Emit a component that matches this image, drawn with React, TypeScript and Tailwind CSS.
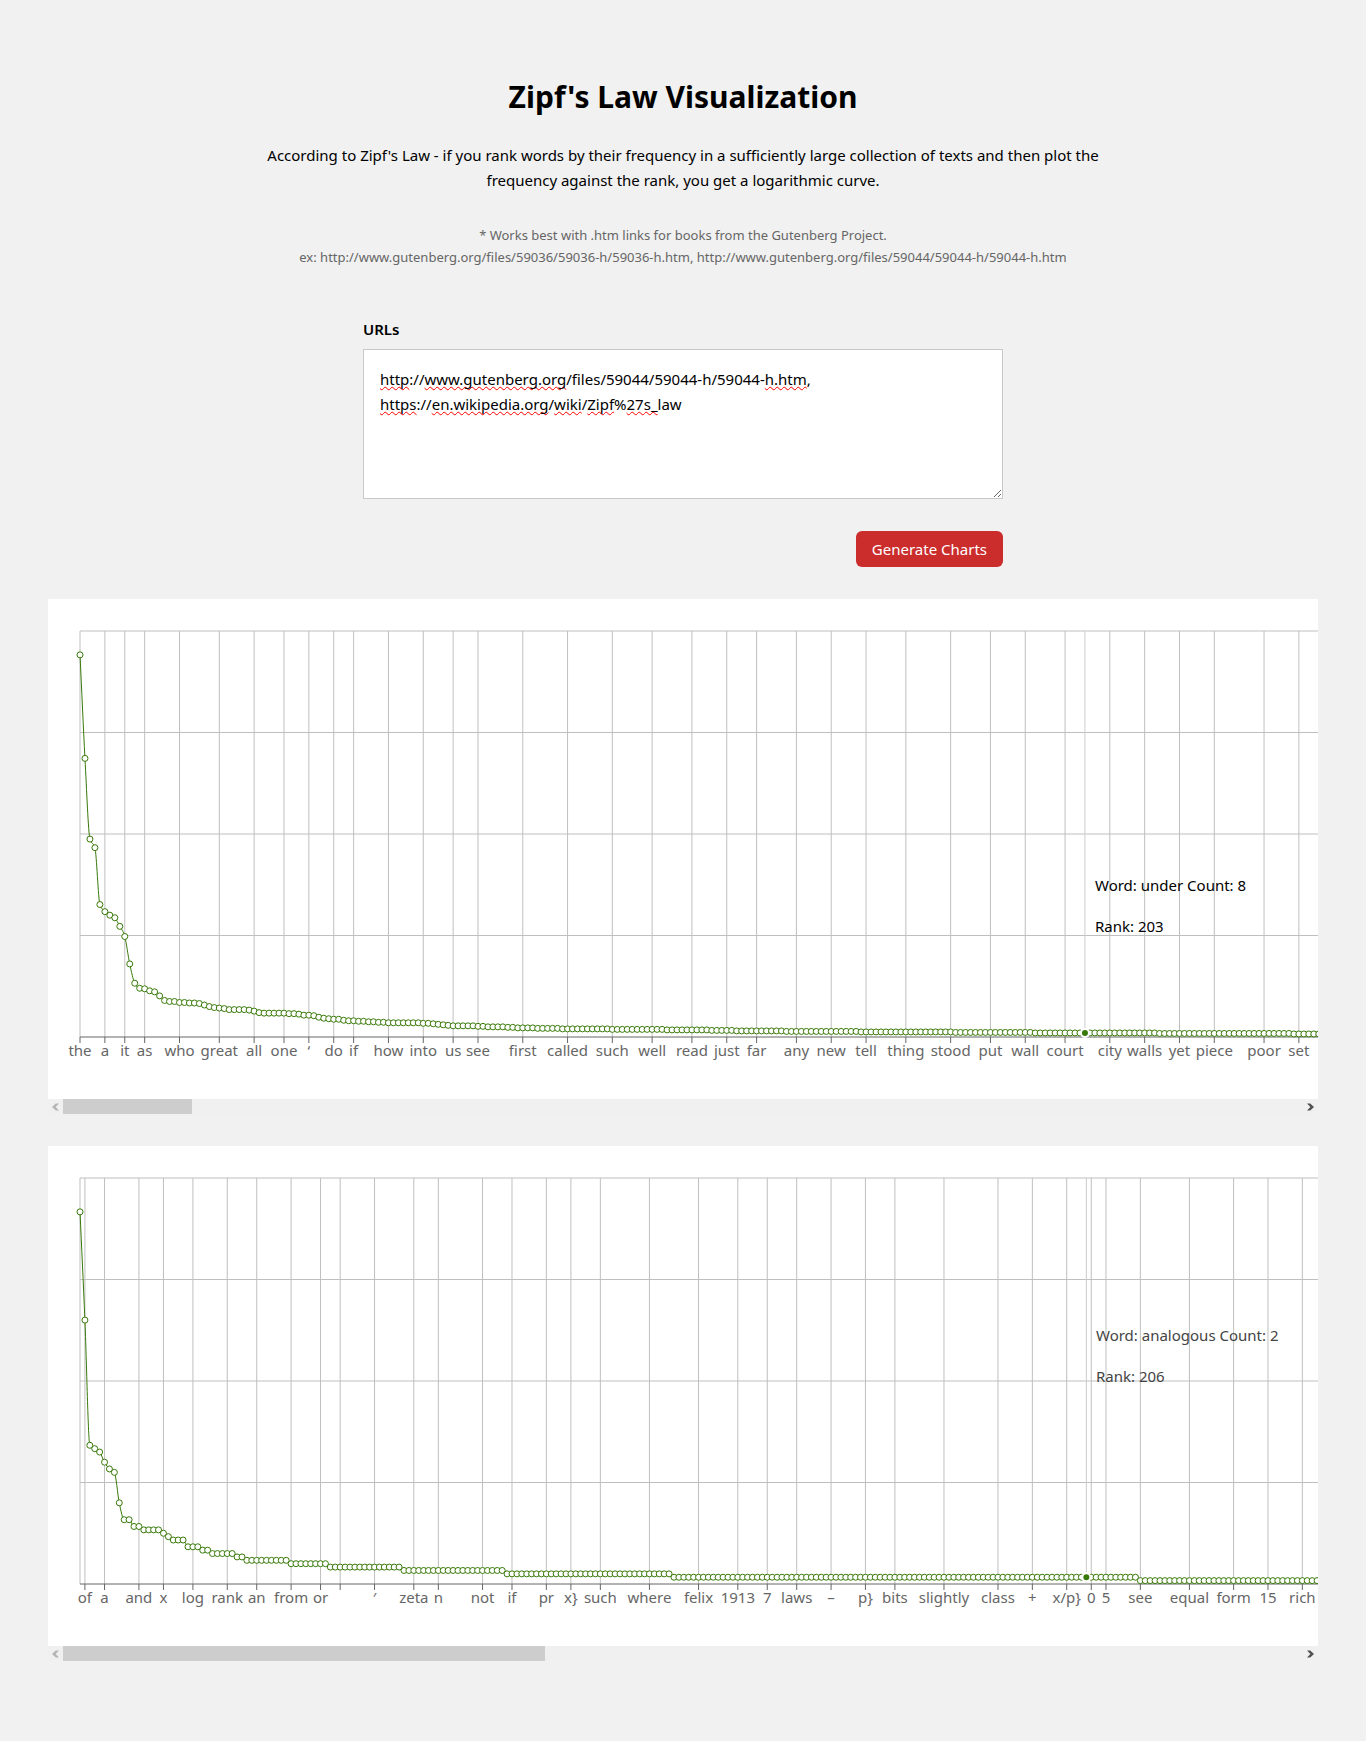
import { useRef } from "react";

type Run = [from: number, value: number];
type Tick = [index: number, label: string];
type ChartData = {
  width: number;
  step: number;
  max: number;
  runs: Run[];
  ticks: Tick[];
  active: { index: number; word: string; count: number };
};

const BOOK: ChartData = {
  width: 12208,
  step: 4.975,
  max: 800,
  runs: [
    [0, 753], [1, 549], [2, 390], [3, 373], [4, 261], [5, 247], [6, 240], [7, 235], [8, 218],
    [9, 198], [10, 144], [11, 106], [12, 96], [13, 95], [14, 91], [15, 89], [16, 81], [17, 72],
    [18, 70], [20, 68], [22, 67], [24, 66], [25, 63], [26, 60], [27, 58], [28, 57], [29, 56],
    [30, 54], [34, 53], [35, 51], [36, 48], [37, 47], [42, 46], [44, 45], [45, 43], [47, 42],
    [48, 39], [49, 37], [50, 36], [51, 35], [53, 33], [54, 32], [56, 31], [58, 30], [60, 29],
    [62, 28], [69, 27], [71, 26], [72, 25], [73, 24], [74, 23], [75, 22], [80, 21], [82, 20],
    [86, 19], [88, 18], [92, 17], [97, 16], [107, 15], [118, 14], [127, 13], [132, 12],
    [142, 11], [157, 10], [176, 9], [192, 8], [217, 7], [244, 6], [300, 5], [380, 4],
    [520, 3], [800, 2], [1300, 1],
  ],
  ticks: [
    [0, "the"], [5, "a"], [9, "it"], [13, "as"], [20, "who"], [28, "great"], [35, "all"],
    [41, "one"], [46, "‘"], [51, "do"], [55, "if"], [62, "how"], [69, "into"], [75, "us"],
    [80, "see"], [89, "first"], [98, "called"], [107, "such"], [115, "well"], [123, "read"],
    [130, "just"], [136, "far"], [144, "any"], [151, "new"], [158, "tell"], [166, "thing"],
    [175, "stood"], [183, "put"], [190, "wall"], [198, "court"], [207, "city"], [214, "walls"],
    [221, "yet"], [228, "piece"], [238, "poor"], [245, "set"],
  ],
  active: { index: 202, word: "under", count: 8 },
};

const ARTICLE: ChartData = {
  width: 3267,
  step: 4.909,
  max: 120,
  runs: [
    [0, 110], [1, 78], [2, 41], [3, 40], [4, 39], [5, 36], [6, 34], [7, 33], [8, 24], [9, 19],
    [11, 17], [13, 16], [17, 15], [18, 14], [19, 13], [22, 11], [25, 10], [27, 9], [32, 8],
    [34, 7], [43, 6], [51, 5], [66, 4], [87, 3], [121, 2], [216, 1],
  ],
  ticks: [
    [1, "of"], [5, "a"], [12, "and"], [17, "x"], [23, "log"], [30, "rank"], [36, "an"],
    [43, "from"], [49, "or"], [53, ""], [60, "′"], [68, "zeta"], [73, "n"], [82, "not"],
    [88, "if"], [95, "pr"], [100, "x}"], [106, "such"], [116, "where"], [126, "felix"],
    [134, "1913"], [140, "7"], [146, "laws"], [153, "–"], [160, "p}"], [166, "bits"],
    [176, "slightly"], [187, "class"], [194, "+"], [201, "x/p}"], [206, "0"], [209, "5"],
    [216, "see"], [226, "equal"], [235, "form"], [242, "15"], [249, "rich"],
  ],
  active: { index: 205, word: "analogous", count: 2 },
};

const MARGIN = 32;
const PLOT_HEIGHT = 406;
const BASE = MARGIN + PLOT_HEIGHT;

function expand({ width, step, runs }: ChartData) {
  const count = Math.floor((width - 2 * MARGIN) / step) + 1;
  const values: number[] = [];
  let run = 0;
  for (let i = 0; i < count; i++) {
    while (run + 1 < runs.length && runs[run + 1][0] <= i) run++;
    values.push(runs[run][1]);
  }
  return values;
}

// Monotone cubic through evenly spaced points.
function monotonePath(ys: number[], step: number) {
  const slope = (i: number) => (ys[i + 1] - ys[i]) / step;
  const tangents = ys.map((_, i) => {
    if (i === 0 || i === ys.length - 1) return slope(i === 0 ? 0 : i - 1);
    const a = slope(i - 1);
    const b = slope(i);
    if (a * b <= 0) return 0;
    return Math.sign(a) * Math.min(2 * Math.abs(a), 2 * Math.abs(b), Math.abs(a + b) / 2);
  });
  let d = `M${MARGIN},${ys[0]}`;
  for (let i = 1; i < ys.length; i++) {
    const x0 = MARGIN + (i - 1) * step;
    const third = step / 3;
    d += `C${x0 + third},${ys[i - 1] + tangents[i - 1] * third} ${x0 + 2 * third},${ys[i] - tangents[i] * third} ${x0 + step},${ys[i]}`;
  }
  return d;
}

function Arrow({ flip = false }: { flip?: boolean }) {
  return (
    <svg width="7" height="8" viewBox="0 0 7 8" className={flip ? "rotate-180" : ""} aria-hidden="true">
      <path d="M0 0.5H3.2L7 4L3.2 7.5H0L3.4 4Z" fill="currentColor" />
    </svg>
  );
}

function Chart({ data, label, soft = false }: { data: ChartData; label: string; soft?: boolean }) {
  const view = useRef<HTMLDivElement>(null);
  const { width, step, max, ticks, active } = data;
  const ys = expand(data).map((v) => BASE - (v / max) * PLOT_HEIGHT);
  const x = (i: number) => MARGIN + i * step;
  const right = width - MARGIN;
  const scroll = (dx: number) => view.current?.scrollBy({ left: dx });

  return (
    <section aria-label={label}>
      <div ref={view} className="relative overflow-hidden bg-white">
        <svg width={width} height={500} className="block max-w-none">
          <g stroke="#bfbfbf">
            {[0, 1, 2, 3].map((i) => (
              <line key={i} x1={MARGIN} x2={right} y1={MARGIN + i * 101.5} y2={MARGIN + i * 101.5} />
            ))}
            <line x1={MARGIN} x2={MARGIN} y1={MARGIN} y2={BASE} />
            {ticks.filter(([i]) => i > 0).map(([i]) => (
              <line key={i} x1={x(i)} x2={x(i)} y1={MARGIN} y2={BASE} />
            ))}
          </g>
          <g stroke="#666">
            <line x1={MARGIN} x2={right} y1={BASE} y2={BASE} />
            {ticks.map(([i]) => (
              <line key={i} x1={x(i)} x2={x(i)} y1={BASE} y2={BASE + 6} />
            ))}
          </g>
          <g fill="#666" fontSize="15" textAnchor="middle">
            {ticks.map(([i, word]) => (
              <text key={i} x={x(i)} y={BASE + 19}>
                {word}
              </text>
            ))}
          </g>
          <line x1={x(active.index)} x2={x(active.index)} y1={MARGIN} y2={BASE} stroke="#ccc" />
          <path d={monotonePath(ys, step)} fill="none" stroke="#387908" />
          <g fill="#fff" stroke="#387908">
            {ys.map((y, i) => (
              <circle key={i} cx={x(i)} cy={y} r="3" />
            ))}
          </g>
          <circle cx={x(active.index)} cy={ys[active.index]} r="4" fill="#387908" stroke="#fff" strokeWidth="2" />
        </svg>
        <div
          role="tooltip"
          className={
            soft
              ? "absolute left-[1048px] top-[177px] space-y-4 text-[15px] leading-[25px] text-[#444]"
              : "absolute left-[1047px] top-[274px] space-y-4 text-[15px] leading-[25px] text-black"
          }
        >
          <p>
            Word: {active.word} Count: {active.count}
          </p>
          <p>Rank: {active.index + 1}</p>
        </div>
      </div>
      <div className="flex h-[15px] items-stretch bg-[#f0f0f0]">
        <button
          type="button"
          aria-label="Scroll left"
          onClick={() => scroll(-200)}
          className="flex w-[15px] items-center justify-center text-[#b5b5b5]"
        >
          <Arrow flip />
        </button>
        <div className="flex-1">
          <div className="h-full bg-[#cdcdcd]" style={{ width: `${(1270 / width) * 100}%` }} />
        </div>
        <button
          type="button"
          aria-label="Scroll right"
          onClick={() => scroll(200)}
          className="flex w-[15px] items-center justify-center text-[#505050]"
        >
          <Arrow />
        </button>
      </div>
    </section>
  );
}

const URLS = "http://www.gutenberg.org/files/59044/59044-h/59044-h.htm,\nhttps://en.wikipedia.org/wiki/Zipf%27s_law";
const SPELLING = /(https?|www\.gutenberg\.org|h\.htm|en\.wikipedia\.org|wiki(?=\/)|Zipf|27s_)/;

export default function App() {
  return (
    <main className="min-h-screen bg-[#f1f1f1] px-12 pt-[73px] pb-20 font-['Noto_Sans','Open_Sans',sans-serif] text-[15px] leading-[25px] text-black">
      <header className="mx-auto max-w-[860px] text-center">
        <h1 className="text-[30px] leading-[48px] font-bold">Zipf's Law Visualization</h1>
        <p className="mt-[22px]">
          According to Zipf's Law - if you rank words by their frequency in a sufficiently large collection of texts and
          then plot the frequency against the rank, you get a logarithmic curve.
        </p>
        <p className="mt-[31px] text-[13px] leading-[22px] text-[#666]">
          * Works best with .htm links for books from the Gutenberg Project.
          <br />
          ex: http://www.gutenberg.org/files/59036/59036-h/59036-h.htm,
          http://www.gutenberg.org/files/59044/59044-h/59044-h.htm
        </p>
      </header>

      <form className="mx-auto mt-[49px] flex max-w-[640px] flex-col" onSubmit={(e) => e.preventDefault()}>
        <label htmlFor="urls" className="text-[15px] font-semibold">
          URLs
        </label>
        <div className="mt-[7px] grid bg-white">
          <div
            aria-hidden="true"
            className="col-start-1 row-start-1 border border-transparent px-4 pt-[17px] whitespace-pre-wrap text-transparent select-none"
          >
            {URLS.split(SPELLING).map((part, i) =>
              i % 2 ? (
                <span
                  key={i}
                  className="underline decoration-[#ff0000] decoration-wavy decoration-1 underline-offset-1 [text-decoration-skip-ink:none]"
                >
                  {part}
                </span>
              ) : (
                part
              ),
            )}
          </div>
          <textarea
            id="urls"
            spellCheck={false}
            defaultValue={URLS}
            className="col-start-1 row-start-1 h-[150px] w-full resize border border-[#c8c8c8] bg-transparent px-4 pt-[17px] outline-none"
          />
        </div>
        <button type="submit" className="mt-8 h-9 self-end rounded-md bg-[#cb2c2c] px-4 text-white">
          Generate Charts
        </button>
      </form>

      <div className="mt-8 space-y-8">
        <Chart data={BOOK} label="Word frequencies in the book" />
        <Chart data={ARTICLE} label="Word frequencies in the article" soft />
      </div>
    </main>
  );
}
